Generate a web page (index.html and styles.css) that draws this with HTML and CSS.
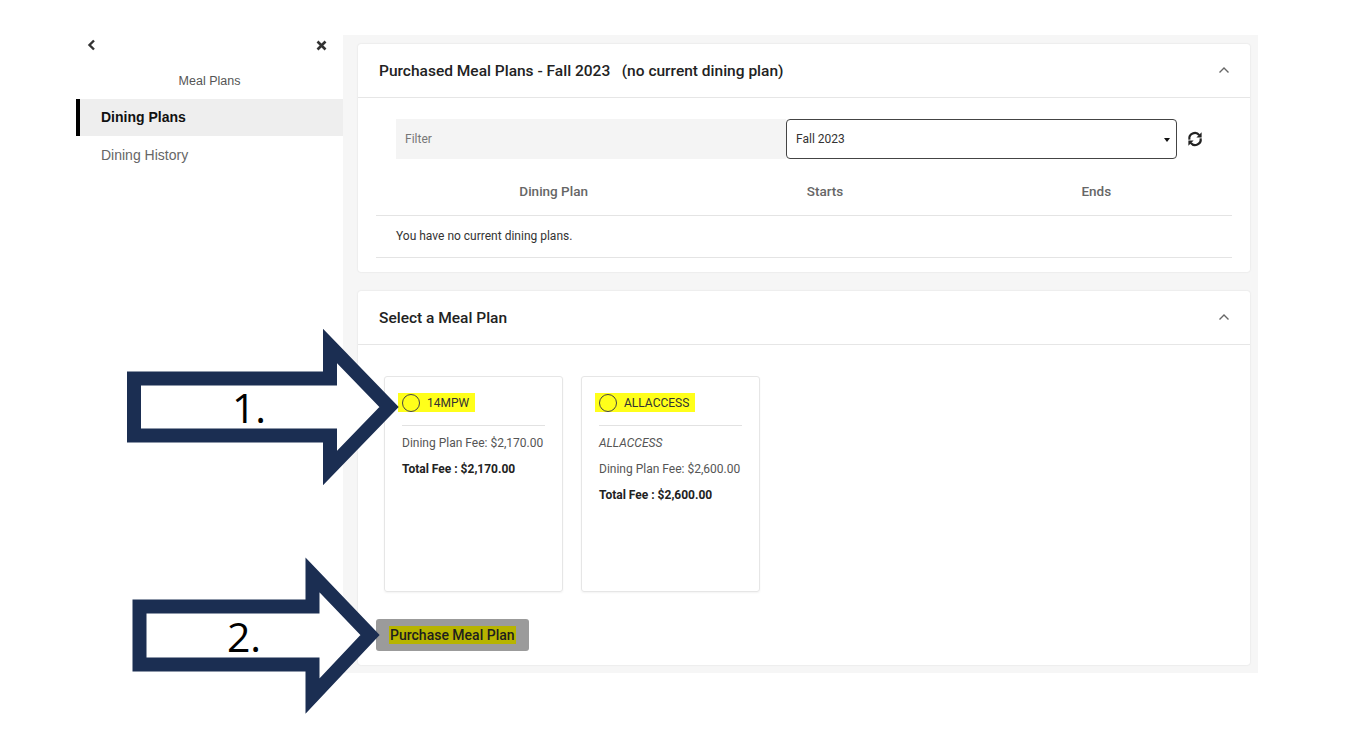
FILE: index.html
```html
<!DOCTYPE html>
<html lang="en">
<head>
    <meta charset="UTF-8">
    <title>Meal Plans</title>
    <link rel="stylesheet" href="styles.css">
</head>
<body>
    <div class="page">
        <aside class="sidebar">
            <div class="side-top">
                <svg class="back" width="10" height="12" viewBox="0 0 10 12"><polyline points="7,1.5 2.5,6 7,10.5" fill="none" stroke="#333" stroke-width="2.4"/></svg>
                <svg class="close" width="11" height="11" viewBox="0 0 11 11"><path d="M1.5 1.5 L9.5 9.5 M9.5 1.5 L1.5 9.5" stroke="#333" stroke-width="2.6"/></svg>
            </div>
            <div class="side-title">Meal Plans</div>
            <a class="side-link active">Dining Plans</a>
            <a class="side-link">Dining History</a>
        </aside>

        <main class="main">
            <section class="card purchased">
                <div class="card-header">
                    <h2>Purchased Meal Plans - Fall 2023&nbsp;&nbsp; (no current dining plan)</h2>
                    <svg class="chev" width="12" height="8" viewBox="0 0 12 8"><polyline points="1.5,6.5 6,2 10.5,6.5" fill="none" stroke="#666" stroke-width="1.4"/></svg>
                </div>
                <div class="card-body">
                    <div class="filter-row">
                        <div class="filter">Filter</div>
                        <div class="select">
                            <span>Fall 2023</span>
                            <span class="caret"></span>
                        </div>
                        <svg class="refresh" width="18" height="18" viewBox="0 0 18 18">
                            <path d="M3.4 9.6 A5.6 5.6 0 0 1 13.3 5.1" fill="none" stroke="#222" stroke-width="2.2"/>
                            <polygon points="15.6,2.2 15.6,7.6 10.4,7.6" fill="#222"/>
                            <path d="M14.6 8.4 A5.6 5.6 0 0 1 4.7 12.9" fill="none" stroke="#222" stroke-width="2.2"/>
                            <polygon points="2.4,15.8 2.4,10.4 7.6,10.4" fill="#222"/>
                        </svg>
                    </div>
                    <div class="table">
                        <div class="thead">
                            <div>Dining Plan</div>
                            <div>Starts</div>
                            <div>Ends</div>
                        </div>
                        <div class="trow">You have no current dining plans.</div>
                    </div>
                </div>
            </section>

            <section class="card select-plan">
                <div class="card-header">
                    <h2>Select a Meal Plan</h2>
                    <svg class="chev" width="12" height="8" viewBox="0 0 12 8"><polyline points="1.5,6.5 6,2 10.5,6.5" fill="none" stroke="#666" stroke-width="1.4"/></svg>
                </div>
                <div class="card-body">
                    <div class="plans">
                        <div class="plan">
                            <label class="plan-name"><span class="radio"></span>14MPW</label>
                            <div class="plan-info">
                                <p>Dining Plan Fee: $2,170.00</p>
                                <p class="total">Total Fee : $2,170.00</p>
                            </div>
                        </div>
                        <div class="plan">
                            <label class="plan-name"><span class="radio"></span>ALLACCESS</label>
                            <div class="plan-info">
                                <p class="desc">ALLACCESS</p>
                                <p>Dining Plan Fee: $2,600.00</p>
                                <p class="total">Total Fee : $2,600.00</p>
                            </div>
                        </div>
                    </div>
                    <button class="purchase"><span>Purchase Meal Plan</span></button>
                </div>
            </section>
        </main>
    </div>

    <svg class="callouts" width="1365" height="746" viewBox="0 0 1365 746">
        <polygon points="134,378.5 330,378.5 330,346 389,407 330,468 330,435.5 134,435.5" fill="#fff" stroke="#1b2e52" stroke-width="14"/>
        <text x="249" y="423" text-anchor="middle" class="callout-num">1.</text>
        <polygon points="139.5,606.5 312.5,606.5 312.5,575 370,635 312.5,696 312.5,664.5 139.5,664.5" fill="#fff" stroke="#1b2e52" stroke-width="14"/>
        <text x="244" y="652" text-anchor="middle" class="callout-num">2.</text>
    </svg>
</body>
</html>
```

FILE: styles.css
```css
* {
    box-sizing: border-box;
}

body {
    margin: 0;
    background: #fff;
    font-family: Roboto, "Liberation Sans", Arial, sans-serif;
    color: #222;
    position: relative;
    width: 1365px;
    height: 746px;
    overflow: hidden;
}

.page {
    display: flex;
    margin: 35px 0 0 76px;
    width: 1182px;
}

/* sidebar */
.sidebar {
    width: 267px;
    font-family: "Liberation Sans", Arial, sans-serif;
}

.side-top {
    display: flex;
    justify-content: space-between;
    align-items: center;
    height: 20px;
    padding: 0 16px 0 11px;
}

.back,
.close {
    display: block;
}

.side-title {
    text-align: center;
    font-size: 12.5px;
    color: #555;
    padding: 19px 0 0;
    height: 44px;
}

.side-link {
    display: block;
    height: 38px;
    line-height: 38px;
    padding-left: 25px;
    font-size: 14px;
    color: #666;
}

.side-link.active {
    background: #eee;
    border-left: 4px solid #000;
    padding-left: 21px;
    color: #111;
    font-weight: bold;
    height: 37px;
    line-height: 37px;
}

/* main */
.main {
    width: 915px;
    height: 638px;
    background: #f6f6f6;
    padding: 9px 8px 8px 15px;
    display: flex;
    flex-direction: column;
    gap: 19px;
}

.card {
    background: #fff;
    border-radius: 3px;
    box-shadow: 0 0 2px rgba(0, 0, 0, 0.12);
}

.card-header {
    height: 54px;
    border-bottom: 1px solid #e6e6e6;
    display: flex;
    align-items: center;
    justify-content: space-between;
    padding: 0 20px 0 21px;
}

.card-header h2 {
    margin: 0;
    font-size: 15.5px;
    font-weight: 500;
    color: #222;
    padding-top: 1px;
}

.chev {
    display: block;
    margin-top: -2px;
}

.purchased {
    height: 228px;
}

.purchased .card-body {
    padding: 21px 18px 0;
}

.filter-row {
    display: flex;
    align-items: center;
    padding-left: 20px;
}

.filter {
    width: 390px;
    height: 40px;
    background: #f4f4f4;
    font-size: 12px;
    color: #777;
    line-height: 40px;
    padding-left: 9px;
}

.select {
    width: 391px;
    height: 40px;
    border: 1px solid #444;
    border-radius: 4px;
    display: flex;
    align-items: center;
    justify-content: space-between;
    padding: 0 6px 0 9px;
    font-size: 12px;
    color: #333;
}

.caret {
    width: 0;
    height: 0;
    border-left: 3.5px solid transparent;
    border-right: 3.5px solid transparent;
    border-top: 4px solid #111;
    margin-top: 1px;
}

.refresh {
    display: block;
    margin-left: 9px;
}

.table {
    margin-top: 8px;
}

.thead {
    display: grid;
    grid-template-columns: 1fr 1fr 1fr;
    padding-left: 42px;
    height: 49px;
    align-items: center;
    border-bottom: 1px solid #e4e4e4;
    font-size: 13.5px;
    font-weight: 500;
    color: #666;
    text-align: center;
}

.trow {
    height: 42px;
    line-height: 41px;
    border-bottom: 1px solid #e4e4e4;
    padding-left: 20px;
    font-size: 12px;
    color: #333;
}

.select-plan {
    height: 374px;
}

.select-plan .card-body {
    padding: 31px 18px 0;
}

.plans {
    display: flex;
    gap: 18px;
    padding-left: 8px;
}

.plan {
    width: 179px;
    height: 216px;
    border: 1px solid #e6e6e6;
    border-radius: 3px;
    box-shadow: 0 1px 2px rgba(0, 0, 0, 0.05);
    padding: 16px 17px 0 13px;
}

.plan-name {
    display: inline-flex;
    align-items: center;
    gap: 7px;
    height: 19px;
    padding: 0 6px 0 4px;
    background: #ffff1a;
    font-size: 12px;
    color: #333;
}

.radio {
    width: 18px;
    height: 18px;
    border: 1.7px solid #444;
    border-radius: 50%;
}

.plan-info {
    margin: 9px 0 0 4px;
    border-top: 1px solid #e2e2e2;
    padding-top: 10px;
}

.plan-info p {
    margin: 0;
    height: 26px;
    font-size: 12px;
    color: #555;
}

.plan-info .desc {
    font-style: italic;
}

.plan-info .total {
    font-weight: bold;
    color: #222;
}

.purchase {
    margin-top: 27px;
    height: 32px;
    padding: 0 13px;
    border: none;
    border-radius: 3px;
    background: #9b9b9b;
    font-family: Roboto, "Liberation Sans", Arial, sans-serif;
    font-size: 14px;
    font-weight: 500;
    color: #1e1e1e;
}

.purchase span {
    background: #b7b400;
    padding: 1px 1px;
}

/* annotation arrows */
.callouts {
    position: absolute;
    top: 0;
    left: 0;
    pointer-events: none;
}

.callout-num {
    font-family: "Open Sans", "Liberation Sans", sans-serif;
    font-size: 41px;
    fill: #000;
}
```
